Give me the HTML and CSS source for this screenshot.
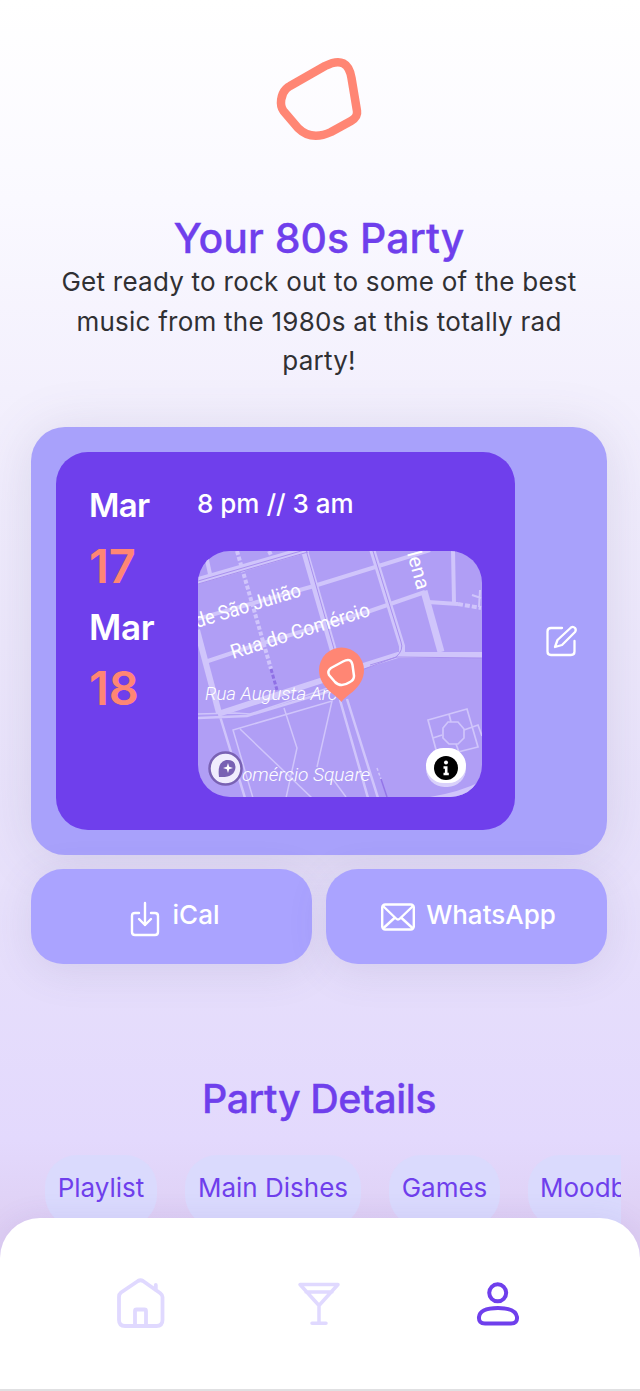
FILE: index.html
```html
<!DOCTYPE html>
<html lang="en">
<head>
<meta charset="utf-8">
<title>Your 80s Party</title>
<link rel="stylesheet" href="styles.css">
</head>
<body>
<div class="screen">
  <main class="content">
    <svg class="logo" viewBox="260 40 120 120" fill="none">
      <path d="M325 66C341 58 349 63 351.500 78L357 111Q358 117 351 121L331 132C316 139 306 136 298 128L283.500 111C279 105 281 94 286 89Q288 87 290 86Z" stroke="#ff8674" stroke-width="8.500" stroke-linejoin="round"/>
    </svg>
    <h1 class="title">Your 80s Party</h1>
    <p class="intro">Get ready to rock out to some of the best<br>music from the 1980s at this totally rad<br>party!</p>

    <section class="event">
      <div class="event-info">
        <div class="dates">
          <span class="month">Mar</span>
          <span class="day">17</span>
          <span class="month month-end">Mar</span>
          <span class="day">18</span>
        </div>
        <div class="place">
          <div class="time">8 pm // 3 am</div>
          <svg class="map" viewBox="198 551 284 246" fill="none">
            <rect x="198" y="551" width="284" height="246" fill="#b09ef5"/>
            <g stroke="#d0c5fb" stroke-width="4">
              <path d="M197 581L308 549" stroke-width="7"/>
              <path d="M205 551L210 574"/>
              <path d="M304 549L335 656" stroke-width="7"/>
              <path d="M197 619L314 586L430 550"/>
              <path d="M205 662L250 647L370 611L425 592"/>
              <path d="M197 630L219 713" stroke-width="6"/>
              <path d="M218 714L323 680L363 666L398 655L482 655" stroke-width="6"/>
              <path d="M372 549L402 646V655" stroke-width="6"/>
              <path d="M424 591L441 652" stroke-width="7"/>
              <path d="M453 550L454 603M428 602L458 604"/>
              <path d="M458 604L481 608" stroke-dasharray="5 2"/>
              <path d="M480 590L479 607M472 595L481 598" stroke-width="2"/>
              <path d="M237 551L271 669" stroke-dasharray="4 2"/>
              <path d="M269 551L272 557" stroke-dasharray="4 2"/>
              <path d="M219 713L245 798M197 718L247 716L337 689M340 700L368 798M347 699L378 798" stroke-width="2.500"/>
              <path d="M197 714L235 713L250 714L340 684" stroke-width="1.500"/>
              <path d="M253 798L233 730L332 701L317 767M240 729L312 798M284 708L297 748L286 798M332 778L346 797" stroke-width="1.500"/>
              <path d="M428 720L467 709L478 747L438 757ZM449 714L451 722M433 738L442 735M464 730L478 725L482 736M456 744L459 752" stroke-width="1.700"/>
              <path d="M448 722L458 722L464 729V738L458 744H449L443 738V728Z" stroke-width="1.700"/>
              <path d="M377 768L381 779" stroke-width="1.500" stroke-dasharray="3 2"/>
            </g>
            <path d="M198 581L308 549M198 584L308 552M306 550L336 656M373 551L401 642Q404 650 396 657L359 671M370 665L397 657L482 658" stroke="#a890ee" stroke-width="1"/>
            <path d="M271 669L277 690" stroke="#8f70e5" stroke-width="3" stroke-dasharray="4 2"/>
            <path d="M381 779L387 797" stroke="#9476e8" stroke-width="1.500"/>
            <path d="M430 797Q460 792 482 781V797Z" fill="#d0c5fb"/>
            <g class="map-labels" fill="#fff" stroke="none">
              <text transform="translate(197 628) rotate(-17)" textLength="110" lengthAdjust="spacingAndGlyphs">de São Julião</text>
              <text transform="translate(233 659) rotate(-17.500)" textLength="145" lengthAdjust="spacingAndGlyphs">Rua do Comércio</text>
              <text transform="translate(407 553) rotate(75)" textLength="39" lengthAdjust="spacingAndGlyphs">lena</text>
              <text class="map-italic" x="205" y="700" textLength="132" lengthAdjust="spacingAndGlyphs">Rua Augusta Arc</text>
              <text class="map-italic" x="242" y="781" textLength="128" lengthAdjust="spacingAndGlyphs">omércio Square</text>
            </g>
            <path d="M341.500 702C337 695 319 688 319 670A22.500 22.500 0 0 1 364 670C364 688 346 695 341.500 702Z" fill="#ff8674"/>
            <path d="M343 661.500Q351 657 352.500 665L354 676Q354 680 350 682Q341 688 335 682L329 675Q327 671 331 668Z" stroke="#fff" stroke-width="2.500" stroke-linejoin="round"/>
            <circle cx="225.500" cy="768.500" r="16" fill="#f0edfd" stroke="#7962b3" stroke-width="2.500"/>
            <path d="M219 777Q217 762 226 760Q235 759 235.500 767Q235 778 219 777Z" fill="#7962b3"/>
            <path d="M228 763L229.200 766.800L233 768L229.200 769.200L228 773L226.800 769.200L223 768L226.800 766.800Z" fill="#fff"/>
            <rect x="426" y="750" width="40" height="37" rx="18.500" fill="#d9d1fb"/>
            <rect x="426" y="748" width="40" height="35" rx="17.500" fill="#fff"/>
            <circle cx="446" cy="768" r="12" fill="#000"/>
            <circle cx="446" cy="762.500" r="2" fill="#fff"/>
            <path d="M443.500 767.500H446.200V773.500M443.500 774H448.800" stroke="#fff" stroke-width="2.600"/>
          </svg>
        </div>
      </div>
      <svg class="edit" viewBox="0 0 36 36" fill="none" stroke="#fff" stroke-width="2.300" stroke-linejoin="round" stroke-linecap="round">
        <path d="M18 5H7Q3.500 5 3.500 8.500V28.500Q3.500 32 7 32H27Q30.500 32 30.500 28.500V18"/>
        <path d="M11 24L13.500 17L27 4.500Q29 3 31 5Q32.500 7 31 9L18 22Z"/>
      </svg>
    </section>

    <div class="actions">
      <button class="action">
        <svg class="ical-icon" viewBox="0 0 30 36" fill="none" stroke="#fff" stroke-width="2.400" stroke-linecap="round" stroke-linejoin="round">
          <path d="M9 12H5Q2 12 2 15V31Q2 34 5 34H25Q28 34 28 31V15Q28 12 25 12H21M15 2V24M9 18L15 24L21 18"/>
        </svg>
        <span class="ical-label">iCal</span>
      </button>
      <button class="action">
        <svg class="mail-icon" viewBox="0 0 34 28" fill="none" stroke="#fff" stroke-width="2.400" stroke-linejoin="round">
          <rect x="1.200" y="1.500" width="31.600" height="25" rx="3"/>
          <path d="M2 3L15 15.500Q17 17.500 19 15.500L32 3M2 25.500L14 14.500M32 25.500L20 14.500"/>
        </svg>
        <span class="wa-label">WhatsApp</span>
      </button>
    </div>

    <h2 class="details">Party Details</h2>
    <div class="chips">
      <span class="chip chip-playlist">Playlist</span>
      <span class="chip chip-dishes">Main Dishes</span>
      <span class="chip chip-games">Games</span>
      <span class="chip chip-mood">Moodboard</span>
    </div>
  </main>

  <nav class="tabs">
    <svg class="tab" viewBox="115 1277 51 54" fill="none" stroke="#e0d9ff" stroke-width="3.800" stroke-linecap="round" stroke-linejoin="round">
      <path d="M119 1297Q119 1294 121 1292.500L138 1281Q140.500 1279.500 143 1281L160 1293Q162.500 1295 162.500 1297V1320Q162.500 1326 156.500 1326H125Q119 1326 119 1320ZM135 1325V1311Q135 1309.500 136.500 1309.500H144.500Q146 1309.500 146 1311V1325M155.800 1285V1290"/>
    </svg>
    <svg class="tab tab-glass" viewBox="297 1277 45 54" fill="none" stroke="#e0d9ff" stroke-width="3.500" stroke-linecap="round" stroke-linejoin="round">
      <path d="M300 1284.500H338L319 1305.500ZM306 1292H332M319 1305V1323M312 1323.300H326"/>
    </svg>
    <svg class="tab tab-user" viewBox="475 1277 46 54" fill="none" stroke="#6f3fec" stroke-width="4">
      <circle cx="497.700" cy="1292.800" r="8.500"/>
      <path d="M479 1317Q480 1308 498 1308Q515.500 1308 517 1317Q517.500 1323.500 511 1323.500H485Q478.500 1323.500 479 1317Z"/>
    </svg>
  </nav>
</div>
</body>
</html>
```
FILE: styles.css
```css
* {
  box-sizing: border-box;
}

body {
  margin: 0;
  font-family: Inter, "Liberation Sans", sans-serif;
}

.screen {
  display: flex;
  flex-direction: column;
  width: 640px;
  height: 1391px;
  overflow: hidden;
  background: linear-gradient(#ffffff 0, #faf9ff 200px, #f3f0fd 390px, #e7e0fb 900px, #e3d9fd 1140px, #decff3 1230px);
}

.content {
  display: flex;
  flex-direction: column;
  height: 1218px;
  padding: 40px 19px 0 31px;
}

.logo {
  flex: none;
  width: 120px;
  height: 120px;
  margin-left: 229px;
}

.title,
.details {
  flex: none;
  margin: 0;
  width: 576px;
  text-align: center;
  color: #6f3fec;
  font-size: 41px;
  line-height: 48px;
  font-weight: 500;
  white-space: nowrap;
  -webkit-text-stroke: 0.3px #6f3fec;
}

.title {
  margin-top: 54px;
}

.intro {
  flex: none;
  margin: 0;
  width: 576px;
  text-align: center;
  color: #303033;
  font-size: 26px;
  line-height: 39.500px;
  letter-spacing: 0.250px;
  white-space: nowrap;
}

.event {
  display: flex;
  align-items: center;
  width: 576px;
  height: 428px;
  margin-top: 46px;
  padding: 0 25px;
  flex-shrink: 0;
  border-radius: 34px;
  background: #a8a1fb;
  box-shadow: 0 4px 54px rgba(90, 80, 130, 0.15);
}

.event-info {
  display: flex;
  width: 459px;
  height: 378px;
  padding: 33px;
  border-radius: 32px;
  background: #6f3fec;
}

.dates {
  display: flex;
  flex-direction: column;
  width: 109px;
  color: #fff;
  font-weight: 600;
}

.month {
  font-size: 33px;
  line-height: 40px;
  letter-spacing: -0.700px;
}

.month-end {
  font-size: 35px;
  letter-spacing: -0.300px;
}

.day {
  height: 82px;
  font-size: 47px;
  line-height: 81px;
  color: #ff8674;
}

.time {
  height: 66px;
  margin-left: -1px;
  color: #fff;
  font-size: 26px;
  line-height: 38px;
  font-weight: 500;
}

.map {
  display: block;
  width: 284px;
  height: 246px;
  border-radius: 32px;
}

.map-labels {
  font-family: Roboto, sans-serif;
  font-size: 20px;
}

.map-italic {
  font-size: 19px;
  font-style: italic;
  font-weight: 300;
}

.edit {
  width: 36px;
  height: 36px;
  margin-left: 29px;
}

.actions {
  display: flex;
  flex: none;
  gap: 14px;
  margin-top: 14px;
}

.action {
  display: flex;
  justify-content: center;
  width: 281px;
  height: 95px;
  padding: 27px 0 0;
  border: 0;
  border-radius: 32px;
  background: #aaa3ff;
  box-shadow: 0 8px 40px rgba(90, 80, 130, 0.12);
  color: #fff;
  font-family: inherit;
  font-size: 26px;
  line-height: 38px;
  font-weight: 500;
}

.ical-icon {
  width: 30px;
  height: 36px;
  margin: 5px 13px 0 6px;
}

.mail-icon {
  width: 34px;
  height: 28px;
  margin: 7px 11px 0 4px;
}

.details {
  margin-top: 111px;
  font-size: 39.500px;
  letter-spacing: -0.450px;
}

.chips {
  display: flex;
  flex: none;
  gap: 28px;
  margin-top: 32px;
  padding-left: 14px;
  overflow: hidden;
}

.chip {
  flex: none;
  height: 72px;
  border-radius: 32px;
  background: #dadafd;
  color: #6f3fec;
  font-size: 26px;
  line-height: 66px;
  text-align: center;
}

.chip-playlist {
  width: 112px;
}

.chip-dishes {
  width: 176px;
}

.chip-games {
  width: 111px;
}

.chip-mood {
  width: 160px;
  padding-left: 12px;
  text-align: left;
}

.tabs {
  position: relative;
  display: flex;
  flex: none;
  height: 173px;
  padding: 59px 0 0 115px;
  border-radius: 40px 40px 0 0;
  border-bottom: 2px solid #e0e0e2;
  background: #fff;
  box-shadow: 0 0 28px rgba(110, 80, 190, 0.1);
}

.tab {
  width: 51px;
  height: 54px;
}

.tab-glass {
  width: 45px;
  margin-left: 131px;
}

.tab-user {
  width: 46px;
  margin-left: 133px;
}
```
